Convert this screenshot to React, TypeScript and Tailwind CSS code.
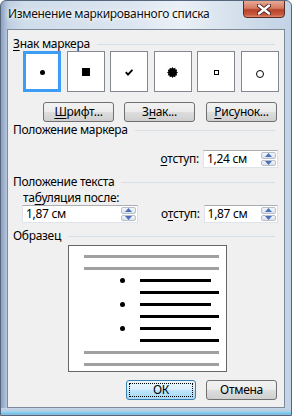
import React from "react";

const font = "font-['Noto_Sans',sans-serif]";

function U({ children }: { children: React.ReactNode }) {
  return <span className="underline underline-offset-[2px] decoration-[1px]">{children}</span>;
}

function Header({ children, className = "" }: { children: React.ReactNode; className?: string }) {
  return (
    <div className={`flex h-[14px] items-center pl-[5px] pr-[9px] ${className}`}>
      <span className="whitespace-nowrap leading-[14px]">{children}</span>
      <div className="ml-[7px] h-px flex-1 bg-[#d5dfe5]" />
    </div>
  );
}

function Arrow({ up }: { up?: boolean }) {
  return (
    <svg width="7" height="4" viewBox="0 0 7 4">
      <path d={up ? "M0 4 L3.5 0 L7 4Z" : "M0 0 L3.5 4 L7 0Z"} fill="#4c6fbf" />
    </svg>
  );
}

function SpinBox({ value, className }: { value: string; className: string }) {
  return (
    <div className={`flex h-[18px] border border-[#abadb3] border-b-[#dfe3ea] border-l-[#e2e3ea] border-r-[#dbdfe6] bg-white ${className}`}>
      <div className="flex flex-1 items-center pl-[3px] leading-none">{value}</div>
      <div className="flex w-[16px] flex-col gap-px py-px pr-px">
        <div className="flex flex-1 items-center justify-center rounded-[2px] border border-[#b9c0ca] bg-gradient-to-b from-[#f4f6f9] to-[#dde3ea]">
          <Arrow up />
        </div>
        <div className="flex flex-1 items-center justify-center rounded-[2px] border border-[#b9c0ca] bg-gradient-to-b from-[#f4f6f9] to-[#dde3ea]">
          <Arrow />
        </div>
      </div>
    </div>
  );
}

function Button({ children, className = "" }: { children: React.ReactNode; className?: string }) {
  return (
    <div
      className={`flex h-[20px] w-[71px] items-center justify-center rounded-[3px] border border-[#707070] bg-[linear-gradient(180deg,#f2f2f2_0%,#ebebeb_48%,#dddddd_52%,#cfcfcf_100%)] leading-none ${className}`}
    >
      {children}
    </div>
  );
}

function flowerPath() {
  const pts: string[] = [];
  for (let i = 0; i < 24; i++) {
    const a = (i / 24) * Math.PI * 2;
    const r = i % 2 === 0 ? 5.5 : 4.2;
    pts.push(`${(5.5 + r * Math.cos(a)).toFixed(2)} ${(5.5 + r * Math.sin(a)).toFixed(2)}`);
  }
  return "M" + pts.join(" L") + "Z";
}

function BulletBox({ selected, children }: { selected?: boolean; children: React.ReactNode }) {
  return (
    <div
      className={`flex h-[41px] w-[38px] items-center justify-center bg-white pt-[1px] ${
        selected ? "border-[3px] border-[#3d9cf6]" : "border border-[#828790]"
      }`}
    >
      {children}
    </div>
  );
}

function Line({ gray, short }: { gray?: boolean; short?: boolean }) {
  if (gray) return <div className="h-[3px] w-[135px] bg-[#a0a0a0]" />;
  return (
    <div className={`ml-[56px] h-[3px] bg-black ${short ? "w-[71px]" : "w-[79px]"}`} />
  );
}

function BulletLine() {
  return (
    <div className="flex h-[3px] items-center">
      <div className="ml-[36px] h-[5px] w-[5px] rounded-full bg-black" />
      <div className="ml-[15px] h-[3px] w-[71px] bg-black" />
    </div>
  );
}

export default function App() {
  return (
    <div
      className={`flex h-[416px] w-[292px] flex-col overflow-hidden rounded-t-[6px] border border-[#56677d] text-[12px] tracking-[-0.3px] text-black ${font} bg-[linear-gradient(90deg,rgba(60,85,140,0.35)_0px,rgba(60,85,140,0.1)_5px,transparent_8px),linear-gradient(90deg,#b6c8de_0%,#cfdcea_8%,#dce6f1_45%,#eaf0f7_62%,#d3dfeb_82%,#c2d3e6_100%)]`}
    >
      <div className="flex h-[28px] shrink-0 items-start justify-between">
        <div className="pl-[7px] pt-[6px] leading-[14px] text-[#111] [text-shadow:0_0_6px_#ffffff,0_0_3px_#ffffff]">
          Изменение маркированного списка
        </div>
        <div className="mr-[6px] mt-[-1px] flex h-[18px] w-[42px] items-center justify-center rounded-b-[4px] border border-[#5a2a24] bg-[linear-gradient(180deg,#e9a995_0%,#d47a63_45%,#b8412c_55%,#c75a3e_85%,#e0896a_100%)]">
          <svg width="14" height="11" viewBox="0 0 14 11">
            <path d="M2 1.5 L12 9.5 M12 1.5 L2 9.5" stroke="#4a2320" strokeWidth="4.2" strokeLinecap="round" />
            <path d="M2 1.5 L12 9.5 M12 1.5 L2 9.5" stroke="#ffffff" strokeWidth="2.4" strokeLinecap="round" />
          </svg>
        </div>
      </div>

      <div className="ml-[6px] mr-[6px] flex h-[379px] shrink-0 flex-col border border-[#7d8a99] bg-[#f0f0f0]">
        <Header className="mt-[7px]">
          <U>З</U>нак маркера
        </Header>

        <div className="ml-[15px] flex gap-[5.6px]">
          <BulletBox selected>
            <div className="h-[5px] w-[5px] rounded-full bg-black" />
          </BulletBox>
          <BulletBox>
            <div className="h-[8px] w-[8px] bg-black" />
          </BulletBox>
          <BulletBox>
            <svg width="8" height="7" viewBox="0 0 8 7">
              <path d="M0.8 3.2 L3 5.6 L7.4 0.8" stroke="#000" strokeWidth="1.8" fill="none" />
            </svg>
          </BulletBox>
          <BulletBox>
            <svg width="11" height="11" viewBox="0 0 11 11">
              <path d={flowerPath()} fill="#000" />
            </svg>
          </BulletBox>
          <BulletBox>
            <div className="h-[5px] w-[5px] border border-black" />
          </BulletBox>
          <BulletBox>
            <div className="mt-[3px] h-[8px] w-[8px] rounded-full border border-black" />
          </BulletBox>
        </div>

        <div className="ml-[35px] mt-[10px] flex gap-[10px]">
          <Button>
            <U>Ш</U>рифт...
          </Button>
          <Button>
            З<U>н</U>ак...
          </Button>
          <Button className="ml-px">
            <U>Р</U>исунок...
          </Button>
        </div>

        <Header className="mt-[1px]">Положение маркера</Header>

        <div className="mt-[13px] flex items-center justify-end pr-[6px]">
          <span className="mr-[4px] leading-none">
            <U>о</U>тступ:
          </span>
          <SpinBox value="1,24 см" className="w-[75px]" />
        </div>

        <Header className="mt-[7px]">Положение текста</Header>
        <div className="mt-[2px] flex h-[14px] items-center pl-[15px] leading-[14px]">
          та<U>б</U>уляция после:
        </div>
        <div className="flex items-center pr-[6px]">
          <SpinBox value="1,87 см" className="ml-[14px] w-[117px]" />
          <span className="ml-[23px] mr-[4px] leading-none">
            о<U>т</U>ступ:
          </span>
          <SpinBox value="1,87 см" className="w-[75px]" />
        </div>

        <Header className="mt-[6px]">Образец</Header>

        <div className="ml-[60px] mt-[2px] flex h-[127px] w-[159px] flex-col gap-[9px] border border-[#666666] bg-white pl-[15px] pt-[9px]">
          <Line gray />
          <Line gray />
          <BulletLine />
          <Line />
          <BulletLine />
          <Line />
          <BulletLine />
          <Line />
          <Line gray />
          <Line gray />
        </div>

        <div className="mt-[8px] flex justify-end gap-[10px] pr-[7px]">
          <div className="flex h-[20px] w-[70px] items-center justify-center rounded-[3px] border border-[#3c7fb1] bg-[linear-gradient(180deg,#eaf6fd_0%,#d9f0fc_48%,#bee6fd_52%,#a7d9f5_100%)] p-[2px]">
            <div className="flex h-full w-full items-center justify-center border border-dotted border-black leading-none">
              ОК
            </div>
          </div>
          <Button>Отмена</Button>
        </div>
      </div>

      <div className="flex-1 bg-[linear-gradient(180deg,#c6d6e8_0%,#b9cde3_40%,#8fd6f3_60%,#6fc6ee_75%,#9db5cf_100%)]" />
    </div>
  );
}
